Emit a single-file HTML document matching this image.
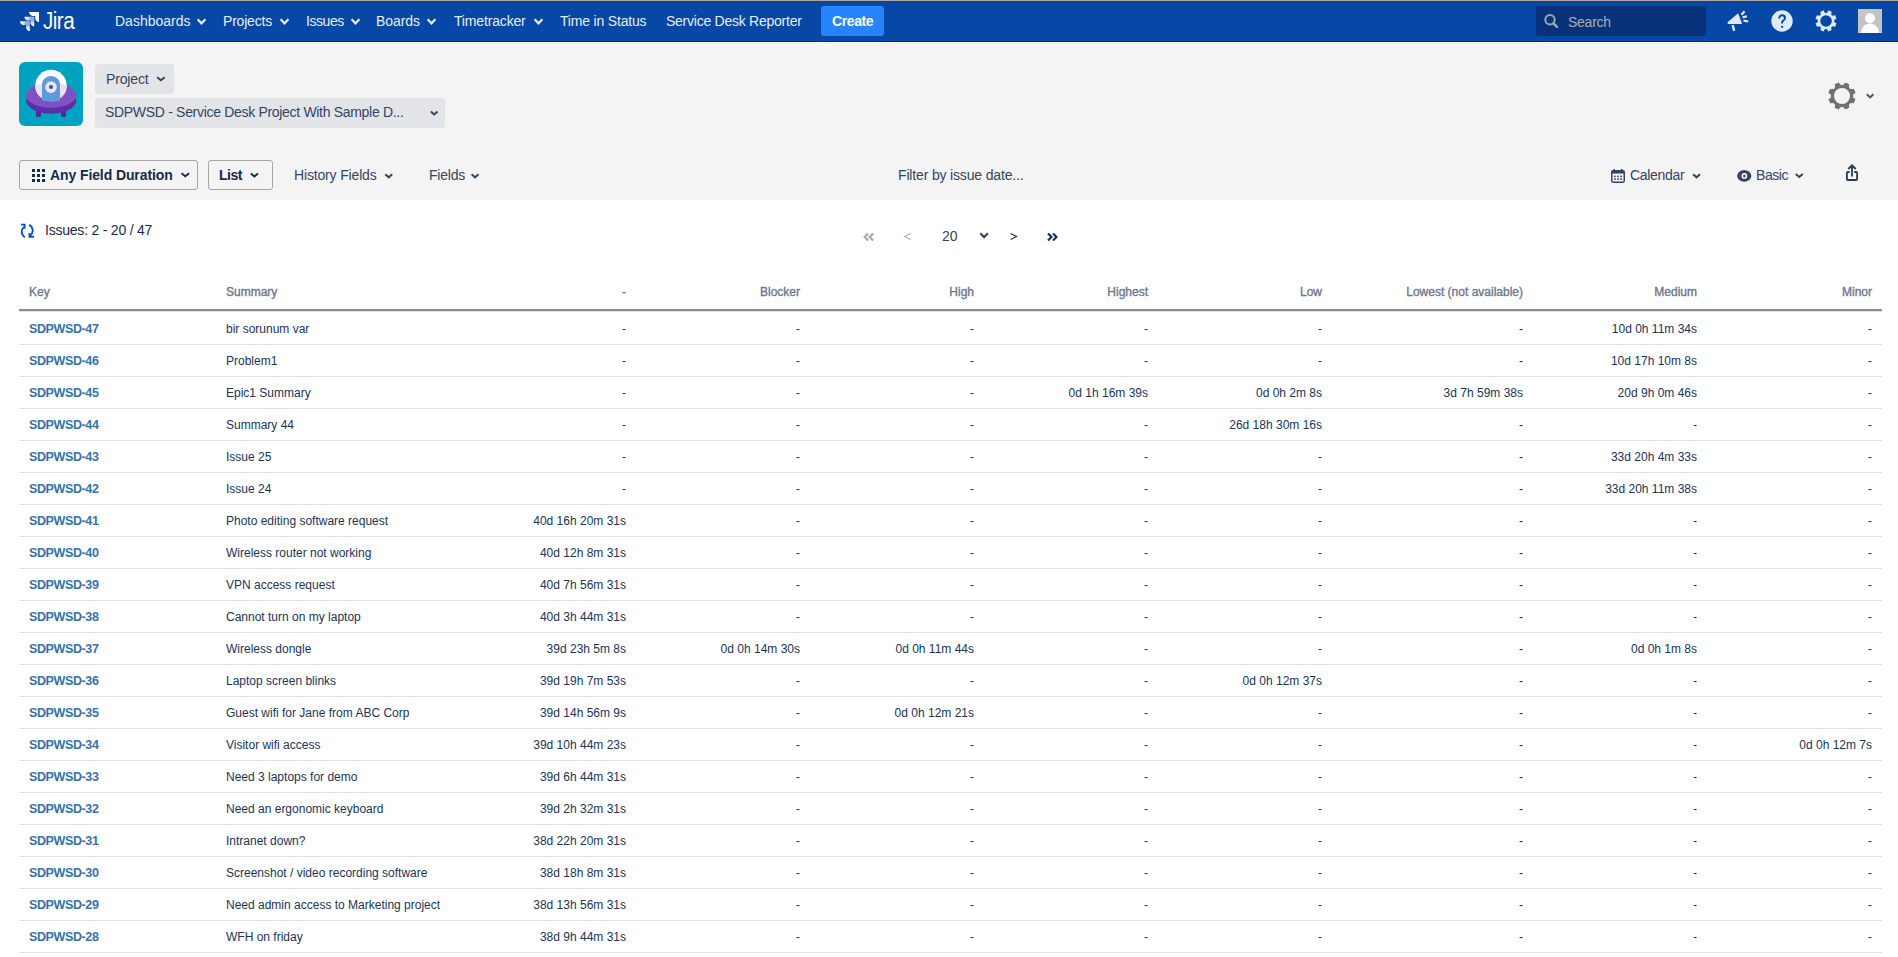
<!DOCTYPE html>
<html><head><meta charset="utf-8"><title>Jira</title>
<style>
html,body{margin:0;padding:0;}
body{width:1898px;height:957px;overflow:hidden;position:relative;background:#fff;font-family:"Liberation Sans",sans-serif;color:#172b4d;}
.abs{position:absolute;display:block;}
.t{position:absolute;white-space:nowrap;line-height:16px;}
.nav{font-size:14px;letter-spacing:-0.25px;color:#e6eeff;top:13px;}
.tb{font-size:14px;letter-spacing:-0.22px;color:#344563;}
.cell{font-size:12px;color:#20335a;line-height:16px;}
.hd{font-size:12px;color:#6b778c;-webkit-text-stroke:0.35px #6b778c;line-height:16px;}
.key{font-size:12.5px;letter-spacing:-0.38px;font-weight:bold;color:#3572b0;line-height:16px;}
</style></head><body>

<div class="abs" style="left:0;top:0;width:1898px;height:1px;background:#b3aa9d"></div>
<div class="abs" style="left:0;top:1px;width:1898px;height:1px;background:#0041a8"></div>
<div class="abs" style="left:0;top:2px;width:1898px;height:39px;background:#0747a6"></div>
<div class="abs" style="left:0;top:41px;width:1898px;height:1px;background:#1b2a4a"></div>
<div class="abs" style="left:0;top:42px;width:1898px;height:1px;background:#ffffff"></div>
<div class="abs" style="left:0;top:43px;width:1898px;height:157px;background:#f4f4f4"></div>
<svg class="abs" style="left:19px;top:11px" width="21" height="21" viewBox="0 0 21 21">
<defs>
<radialGradient id="g1" cx="0.75" cy="0.25" r="0.7"><stop offset="0" stop-color="#fff" stop-opacity="0.5"/><stop offset="0.3" stop-color="#fff" stop-opacity="0.6"/><stop offset="0.75" stop-color="#fff" stop-opacity="1"/></radialGradient>
</defs>
<path d="M10 1 L20 1 L20 11 L19 11 C18 10.5 16.3 9 16.3 8 L16.3 5 L13.5 5 C12 5 10.3 3 10 1.6 Z" fill="#fff"/>
<path d="M5.5 5.8 L15.2 5.8 L15.2 15.3 L14.2 15.3 C13.2 14.8 11.5 13.3 11.5 12.3 L11.5 9.6 L8.8 9.6 C7.3 9.6 5.8 7.6 5.5 6.4 Z" fill="url(#g1)"/>
<path d="M1 10.3 L10.8 10.3 L10.8 20 L9.8 20 C8.8 19.5 7.1 18 7.1 17 L7.1 14.1 L4.3 14.1 C2.8 14.1 1.3 12.1 1 10.9 Z" fill="url(#g1)"/>
</svg>
<div class="t" style="left:43px;top:9px;font-size:23px;line-height:24px;color:#fff;letter-spacing:-0.6px;transform:scaleX(0.9);transform-origin:0 0">Jira</div>
<div class="t nav" style="left:115px;letter-spacing:0.0px">Dashboards</div>
<svg class="abs" style="left:194px;top:16px" width="15" height="12" viewBox="194 16 15 12"><path d="M197.60 19.20 L201.50 23.30 L205.40 19.20" fill="none" stroke="#e6eeff" stroke-width="2.2" stroke-linecap="butt" stroke-linejoin="miter"/></svg>
<div class="t nav" style="left:223px;letter-spacing:-0.2px">Projects</div>
<svg class="abs" style="left:277px;top:16px" width="15" height="12" viewBox="277 16 15 12"><path d="M280.60 19.20 L284.50 23.30 L288.40 19.20" fill="none" stroke="#e6eeff" stroke-width="2.2" stroke-linecap="butt" stroke-linejoin="miter"/></svg>
<div class="t nav" style="left:306px;letter-spacing:-0.45px">Issues</div>
<svg class="abs" style="left:348px;top:16px" width="15" height="12" viewBox="348 16 15 12"><path d="M351.60 19.20 L355.50 23.30 L359.40 19.20" fill="none" stroke="#e6eeff" stroke-width="2.2" stroke-linecap="butt" stroke-linejoin="miter"/></svg>
<div class="t nav" style="left:376px;letter-spacing:-0.08px">Boards</div>
<svg class="abs" style="left:424px;top:16px" width="15" height="12" viewBox="424 16 15 12"><path d="M427.60 19.20 L431.50 23.30 L435.40 19.20" fill="none" stroke="#e6eeff" stroke-width="2.2" stroke-linecap="butt" stroke-linejoin="miter"/></svg>
<div class="t nav" style="left:454px;letter-spacing:-0.16px">Timetracker</div>
<svg class="abs" style="left:531px;top:16px" width="15" height="12" viewBox="531 16 15 12"><path d="M534.60 19.20 L538.50 23.30 L542.40 19.20" fill="none" stroke="#e6eeff" stroke-width="2.2" stroke-linecap="butt" stroke-linejoin="miter"/></svg>
<div class="t nav" style="left:560px;letter-spacing:-0.18px">Time in Status</div>
<div class="t nav" style="left:666px">Service Desk Reporter</div>
<div class="abs" style="left:821px;top:6px;width:63px;height:30px;background:#2684ff;border-radius:3px"></div>
<div class="t" style="left:832px;top:13px;font-size:14px;letter-spacing:-0.4px;font-weight:bold;color:#fff">Create</div>
<div class="abs" style="left:1536px;top:6px;width:170px;height:30px;background:#08337a;border-radius:3px"></div>
<svg class="abs" style="left:1543px;top:13px" width="16" height="16" viewBox="0 0 16 16"><circle cx="7" cy="6.8" r="4.7" fill="none" stroke="#9ea5b2" stroke-width="2"/><path d="M10.4 10.3 L14 13.9" stroke="#9ea5b2" stroke-width="2.5" stroke-linecap="round"/></svg>
<div class="t nav" style="left:1568px;top:14px;color:#a5adba">Search</div>
<svg class="abs" style="left:1722px;top:6px" width="32" height="30" viewBox="0 0 32 30">
<path d="M6.2 16.4 L15.9 8.2 L19.4 17.5 L6.2 17.5 Z" fill="#deebff" stroke="#deebff" stroke-width="1.1" stroke-linejoin="round"/>
<path d="M10.6 19.2 L12.2 24.8" stroke="#deebff" stroke-width="2.4" stroke-linecap="butt"/>
<path d="M19.5 8.8 L22.5 5.2 M20.6 11.4 L24.9 10.3 M21.5 14.6 L26.2 15.5" stroke="#deebff" stroke-width="2.2" stroke-linecap="butt"/>
</svg>
<svg class="abs" style="left:1771px;top:10px" width="22" height="22" viewBox="0 0 22 22">
<circle cx="11" cy="11" r="10.7" fill="#deebff"/>
<path d="M8.2 8.5 C8.2 6.4 9.5 5.2 11.1 5.2 C12.8 5.2 14 6.4 14 7.9 C14 9.5 12.7 10.2 11.8 11 C11.3 11.5 11.1 11.9 11.1 12.6 L11.1 13.6" fill="none" stroke="#0747a6" stroke-width="1.95" stroke-linecap="butt"/>
<circle cx="11.1" cy="16.9" r="1.15" fill="#0747a6"/>
</svg>
<svg class="abs" style="left:1814px;top:9px" width="24" height="24" viewBox="0 0 24 24"><circle cx="12" cy="12" r="10.65" fill="#deebff"/><circle cx="12.00" cy="1.90" r="2.0" fill="#0747a6"/><circle cx="19.14" cy="4.86" r="2.0" fill="#0747a6"/><circle cx="22.10" cy="12.00" r="2.0" fill="#0747a6"/><circle cx="19.14" cy="19.14" r="2.0" fill="#0747a6"/><circle cx="12.00" cy="22.10" r="2.0" fill="#0747a6"/><circle cx="4.86" cy="19.14" r="2.0" fill="#0747a6"/><circle cx="1.90" cy="12.00" r="2.0" fill="#0747a6"/><circle cx="4.86" cy="4.86" r="2.0" fill="#0747a6"/><circle cx="12" cy="12" r="5.8" fill="#0747a6"/></svg>
<svg class="abs" style="left:1858px;top:9px" width="24" height="24" viewBox="0 0 24 24">
<rect width="24" height="24" fill="#c4c4c4"/>
<circle cx="12" cy="9.2" r="5" fill="#fff"/>
<path d="M2.9 24 C3.4 18.2 7 14.6 12 14.6 C17 14.6 20.6 18.2 21.1 24 Z" fill="#fff"/>
</svg>
<svg class="abs" style="left:19px;top:62px" width="64" height="64" viewBox="0 0 64 64">
<rect width="64" height="64" rx="6" fill="#00a3bf"/>
<rect x="17" y="44" width="5" height="11" rx="1.5" fill="#5028a0"/>
<rect x="42" y="44" width="5" height="11" rx="1.5" fill="#5028a0"/>
<ellipse cx="32.2" cy="39" rx="25" ry="12.7" fill="#5a2fa8"/>
<ellipse cx="32.2" cy="33.3" rx="25.1" ry="12.5" fill="#8350c4"/>
<circle cx="32" cy="23.5" r="15.7" fill="#ffffff"/>
<path d="M16.3 23.5 A15.7 15.7 0 0 0 47.7 23.5 L47.7 25 C44 30 38 33 32 33 C26 33 20 30 16.3 25 Z" fill="#e9ddf6" opacity="0.0"/>
<clipPath id="cp"><circle cx="32" cy="23.5" r="15.7"/></clipPath>
<ellipse cx="32.2" cy="33.3" rx="25.1" ry="12.5" fill="#eae0f7" clip-path="url(#cp)"/>
<path d="M23 38.5 L23 23 C23 17.5 27 14 32 14 C37 14 41 17.5 41 23 L41 38.5 C38 39.3 35 39.6 32 39.6 C29 39.6 26 39.3 23 38.5 Z" fill="#5e9bdb"/>
<circle cx="32" cy="25.1" r="5.8" fill="#ebe3f7"/>
<circle cx="32" cy="25.1" r="2" fill="#3d4c8a"/>
</svg>
<div class="abs" style="left:95px;top:64px;width:79px;height:30px;background:#e3e4e8;border-radius:3px"></div>
<div class="t tb" style="left:106px;top:71px;letter-spacing:-0.16px">Project</div>
<svg class="abs" style="left:154px;top:74px" width="15" height="11" viewBox="154 74 15 11"><path d="M157.10 77.20 L160.90 80.20 L164.70 77.20" fill="none" stroke="#344563" stroke-width="2.0" stroke-linecap="butt" stroke-linejoin="miter"/></svg>
<div class="abs" style="left:95px;top:98px;width:350px;height:30px;background:#e3e4e8;border-radius:3px"></div>
<div class="t tb" style="left:105px;top:104px;letter-spacing:-0.31px">SDPWSD - Service Desk Project With Sample D...</div>
<svg class="abs" style="left:427px;top:108px" width="14" height="11" viewBox="427 108 14 11"><path d="M430.80 111.40 L434.20 114.40 L437.60 111.40" fill="none" stroke="#344563" stroke-width="2.0" stroke-linecap="butt" stroke-linejoin="miter"/></svg>
<svg class="abs" style="left:1826px;top:80px" width="32" height="32" viewBox="0 0 32 32"><circle cx="16" cy="16" r="13.75" fill="#707070"/><circle cx="16.00" cy="2.10" r="2.85" fill="#f4f4f4"/><circle cx="25.83" cy="6.17" r="2.85" fill="#f4f4f4"/><circle cx="29.90" cy="16.00" r="2.85" fill="#f4f4f4"/><circle cx="25.83" cy="25.83" r="2.85" fill="#f4f4f4"/><circle cx="16.00" cy="29.90" r="2.85" fill="#f4f4f4"/><circle cx="6.17" cy="25.83" r="2.85" fill="#f4f4f4"/><circle cx="2.10" cy="16.00" r="2.85" fill="#f4f4f4"/><circle cx="6.17" cy="6.17" r="2.85" fill="#f4f4f4"/><circle cx="16" cy="16" r="8.0" fill="#f4f4f4"/></svg>
<svg class="abs" style="left:1863px;top:91px" width="14" height="11" viewBox="1863 91 14 11"><path d="M1866.80 94.20 L1870.10 97.40 L1873.40 94.20" fill="none" stroke="#4a5568" stroke-width="1.9" stroke-linecap="butt" stroke-linejoin="miter"/></svg>
<div class="abs" style="left:19px;top:160px;width:177px;height:28px;border:1px solid #a5a5a5;border-radius:3px"></div>
<div class="abs" style="left:32px;top:169px;width:3px;height:3px;background:#172b4d"></div>
<div class="abs" style="left:37px;top:169px;width:3px;height:3px;background:#172b4d"></div>
<div class="abs" style="left:42px;top:169px;width:3px;height:3px;background:#172b4d"></div>
<div class="abs" style="left:32px;top:174px;width:3px;height:3px;background:#172b4d"></div>
<div class="abs" style="left:37px;top:174px;width:3px;height:3px;background:#172b4d"></div>
<div class="abs" style="left:42px;top:174px;width:3px;height:3px;background:#172b4d"></div>
<div class="abs" style="left:32px;top:179px;width:3px;height:3px;background:#172b4d"></div>
<div class="abs" style="left:37px;top:179px;width:3px;height:3px;background:#172b4d"></div>
<div class="abs" style="left:42px;top:179px;width:3px;height:3px;background:#172b4d"></div>
<div class="t" style="left:50px;top:167px;font-size:14px;letter-spacing:-0.1px;font-weight:bold;color:#172b4d">Any Field Duration</div>
<svg class="abs" style="left:178px;top:170px" width="15" height="11" viewBox="178 170 15 11"><path d="M181.50 173.20 L185.30 176.20 L189.10 173.20" fill="none" stroke="#172b4d" stroke-width="2.0" stroke-linecap="butt" stroke-linejoin="miter"/></svg>
<div class="abs" style="left:208px;top:160px;width:63px;height:28px;border:1px solid #a5a5a5;border-radius:3px"></div>
<div class="t" style="left:219px;top:167px;font-size:14px;letter-spacing:-0.5px;font-weight:bold;color:#172b4d">List</div>
<svg class="abs" style="left:247px;top:170px" width="15" height="11" viewBox="247 170 15 11"><path d="M250.80 173.50 L254.40 176.50 L258.00 173.50" fill="none" stroke="#172b4d" stroke-width="2.0" stroke-linecap="butt" stroke-linejoin="miter"/></svg>
<div class="t tb" style="left:294px;top:167px;letter-spacing:-0.16px">History Fields</div>
<svg class="abs" style="left:382px;top:171px" width="14" height="11" viewBox="382 171 14 11"><path d="M385.30 174.30 L388.75 177.30 L392.20 174.30" fill="none" stroke="#344563" stroke-width="2.0" stroke-linecap="butt" stroke-linejoin="miter"/></svg>
<div class="t tb" style="left:429px;top:167px">Fields</div>
<svg class="abs" style="left:468px;top:171px" width="14" height="11" viewBox="468 171 14 11"><path d="M471.60 174.30 L475.05 177.30 L478.50 174.30" fill="none" stroke="#344563" stroke-width="2.0" stroke-linecap="butt" stroke-linejoin="miter"/></svg>
<div class="t tb" style="left:898px;top:167px;letter-spacing:-0.16px">Filter by issue date...</div>
<svg class="abs" style="left:1611px;top:168px" width="14" height="15" viewBox="0 0 14 15">
<rect x="0.75" y="2.75" width="12.5" height="11.5" rx="1.4" fill="none" stroke="#344563" stroke-width="1.5"/>
<rect x="0.75" y="2.75" width="12.5" height="2.8" fill="#344563"/>
<rect x="2.5" y="1" width="1.5" height="2.5" fill="#344563"/><rect x="10" y="1" width="1.5" height="2.5" fill="#344563"/>
<rect x="3.1" y="7.6" width="1.6" height="1.6" fill="#344563"/><rect x="6.2" y="7.6" width="1.6" height="1.6" fill="#344563"/><rect x="9.3" y="7.6" width="1.6" height="1.6" fill="#344563"/>
<rect x="3.1" y="10.3" width="1.6" height="1.6" fill="#344563"/><rect x="6.2" y="10.3" width="1.6" height="1.6" fill="#344563"/><rect x="9.3" y="10.3" width="1.6" height="1.6" fill="#344563"/>
</svg>
<div class="t tb" style="left:1630px;top:167px;letter-spacing:-0.3px">Calendar</div>
<svg class="abs" style="left:1690px;top:171px" width="14" height="11" viewBox="1690 171 14 11"><path d="M1693.10 174.30 L1696.55 177.30 L1700.00 174.30" fill="none" stroke="#344563" stroke-width="2.0" stroke-linecap="butt" stroke-linejoin="miter"/></svg>
<svg class="abs" style="left:1736px;top:169px" width="17" height="14" viewBox="0 0 17 14">
<ellipse cx="8.25" cy="6.9" rx="7.1" ry="5.95" fill="#344563"/>
<circle cx="8.4" cy="6.9" r="2.9" fill="#f4f4f4"/><circle cx="8.4" cy="6.9" r="1.25" fill="#344563"/>
</svg>
<div class="t tb" style="left:1756px;top:167px;letter-spacing:-0.42px">Basic</div>
<svg class="abs" style="left:1792px;top:171px" width="14" height="11" viewBox="1792 171 14 11"><path d="M1795.80 174.00 L1799.25 177.00 L1802.70 174.00" fill="none" stroke="#344563" stroke-width="2.0" stroke-linecap="butt" stroke-linejoin="miter"/></svg>
<svg class="abs" style="left:1840px;top:160px" width="24" height="26" viewBox="0 0 24 26">
<path d="M9.6 12 L7.9 12 Q6.9 12 6.9 13 L6.9 19 Q6.9 20 7.9 20 L16.1 20 Q17.1 20 17.1 19 L17.1 13 Q17.1 12 16.1 12 L14.2 12" fill="none" stroke="#253858" stroke-width="1.8"/>
<path d="M12 16.6 L12 6" stroke="#253858" stroke-width="1.8"/>
<path d="M8.3 9 L12 5.3 L15.7 9" fill="none" stroke="#253858" stroke-width="1.8"/>
</svg>
<svg class="abs" style="left:16px;top:218px" width="24" height="26" viewBox="0 0 24 26">
<path d="M8.2 8.9 C4.9 11.3 4.6 16.3 8.7 19.2" fill="none" stroke="#0052cc" stroke-width="1.8"/>
<path d="M4.9 6.7 L8.6 6.7 L8.6 10.8" fill="none" stroke="#0052cc" stroke-width="1.8"/>
<path d="M13.1 6.9 C17.6 9.2 17.9 14.8 14 17.7" fill="none" stroke="#0052cc" stroke-width="1.8"/>
<path d="M13.4 14.9 L13.4 18.75 L17.9 18.75" fill="none" stroke="#0052cc" stroke-width="1.8"/>
</svg>
<div class="t" style="left:45px;top:222px;font-size:14px;letter-spacing:-0.22px;color:#172b4d">Issues: 2 - 20 / 47</div>
<svg class="abs" style="left:858px;top:226px" width="60" height="20" viewBox="858 226 60 20">
<path d="M868.1 233.5 L864.6 237 L868.1 240.5 M873.1 233.5 L869.6 237 L873.1 240.5" fill="none" stroke="#a0a8b5" stroke-width="2.1" stroke-linecap="butt" stroke-linejoin="miter"/>
<path d="M910.5 233.4 L904.5 236.5 L910.5 239.6" fill="none" stroke="#a5adba" stroke-width="1.1"/>
</svg>
<div class="t" style="left:942px;top:228px;font-size:14px;color:#344563">20</div>
<svg class="abs" style="left:972px;top:226px" width="90" height="20" viewBox="972 226 90 20">
<path d="M980.3 233.3 L984.1 237.1 L987.9 233.3" fill="none" stroke="#344563" stroke-width="2.2"/>
<path d="M1010.6 233.4 L1016.6 236.5 L1010.6 239.6" fill="none" stroke="#172b4d" stroke-width="1.1"/>
<path d="M1048 233.5 L1051.5 237 L1048 240.5 M1053 233.5 L1056.5 237 L1053 240.5" fill="none" stroke="#172b4d" stroke-width="2.1"/>
</svg>
<div class="t hd" style="left:29px;top:284px">Key</div>
<div class="t hd" style="left:226px;top:284px">Summary</div>
<div class="t hd" style="right:1272px;top:284px;text-align:right">-</div>
<div class="t hd" style="right:1098px;top:284px;text-align:right">Blocker</div>
<div class="t hd" style="right:924px;top:284px;text-align:right">High</div>
<div class="t hd" style="right:750px;top:284px;text-align:right">Highest</div>
<div class="t hd" style="right:576px;top:284px;text-align:right">Low</div>
<div class="t hd" style="right:375px;top:284px;text-align:right">Lowest (not available)</div>
<div class="t hd" style="right:201px;top:284px;text-align:right">Medium</div>
<div class="t hd" style="right:26px;top:284px;text-align:right">Minor</div>
<div class="abs" style="left:19px;top:309px;width:1863px;height:2px;background:#8c8c8c"></div>
<div class="abs" style="left:19px;top:311px;width:1863px;height:1px;background:#dfe1e6"></div>
<div class="t key" style="left:29px;top:321px">SDPWSD-47</div>
<div class="t cell" style="left:226px;top:321px">bir sorunum var</div>
<div class="t cell" style="right:1272px;top:321px">-</div>
<div class="t cell" style="right:1098px;top:321px">-</div>
<div class="t cell" style="right:924px;top:321px">-</div>
<div class="t cell" style="right:750px;top:321px">-</div>
<div class="t cell" style="right:576px;top:321px">-</div>
<div class="t cell" style="right:375px;top:321px">-</div>
<div class="t cell" style="right:201px;top:321px">10d 0h 11m 34s</div>
<div class="t cell" style="right:26px;top:321px">-</div>
<div class="abs" style="left:19px;top:344px;width:1863px;height:1px;background:#dfe1e6"></div>
<div class="t key" style="left:29px;top:353px">SDPWSD-46</div>
<div class="t cell" style="left:226px;top:353px">Problem1</div>
<div class="t cell" style="right:1272px;top:353px">-</div>
<div class="t cell" style="right:1098px;top:353px">-</div>
<div class="t cell" style="right:924px;top:353px">-</div>
<div class="t cell" style="right:750px;top:353px">-</div>
<div class="t cell" style="right:576px;top:353px">-</div>
<div class="t cell" style="right:375px;top:353px">-</div>
<div class="t cell" style="right:201px;top:353px">10d 17h 10m 8s</div>
<div class="t cell" style="right:26px;top:353px">-</div>
<div class="abs" style="left:19px;top:376px;width:1863px;height:1px;background:#dfe1e6"></div>
<div class="t key" style="left:29px;top:385px">SDPWSD-45</div>
<div class="t cell" style="left:226px;top:385px">Epic1 Summary</div>
<div class="t cell" style="right:1272px;top:385px">-</div>
<div class="t cell" style="right:1098px;top:385px">-</div>
<div class="t cell" style="right:924px;top:385px">-</div>
<div class="t cell" style="right:750px;top:385px">0d 1h 16m 39s</div>
<div class="t cell" style="right:576px;top:385px">0d 0h 2m 8s</div>
<div class="t cell" style="right:375px;top:385px">3d 7h 59m 38s</div>
<div class="t cell" style="right:201px;top:385px">20d 9h 0m 46s</div>
<div class="t cell" style="right:26px;top:385px">-</div>
<div class="abs" style="left:19px;top:408px;width:1863px;height:1px;background:#dfe1e6"></div>
<div class="t key" style="left:29px;top:417px">SDPWSD-44</div>
<div class="t cell" style="left:226px;top:417px">Summary 44</div>
<div class="t cell" style="right:1272px;top:417px">-</div>
<div class="t cell" style="right:1098px;top:417px">-</div>
<div class="t cell" style="right:924px;top:417px">-</div>
<div class="t cell" style="right:750px;top:417px">-</div>
<div class="t cell" style="right:576px;top:417px">26d 18h 30m 16s</div>
<div class="t cell" style="right:375px;top:417px">-</div>
<div class="t cell" style="right:201px;top:417px">-</div>
<div class="t cell" style="right:26px;top:417px">-</div>
<div class="abs" style="left:19px;top:440px;width:1863px;height:1px;background:#dfe1e6"></div>
<div class="t key" style="left:29px;top:449px">SDPWSD-43</div>
<div class="t cell" style="left:226px;top:449px">Issue 25</div>
<div class="t cell" style="right:1272px;top:449px">-</div>
<div class="t cell" style="right:1098px;top:449px">-</div>
<div class="t cell" style="right:924px;top:449px">-</div>
<div class="t cell" style="right:750px;top:449px">-</div>
<div class="t cell" style="right:576px;top:449px">-</div>
<div class="t cell" style="right:375px;top:449px">-</div>
<div class="t cell" style="right:201px;top:449px">33d 20h 4m 33s</div>
<div class="t cell" style="right:26px;top:449px">-</div>
<div class="abs" style="left:19px;top:472px;width:1863px;height:1px;background:#dfe1e6"></div>
<div class="t key" style="left:29px;top:481px">SDPWSD-42</div>
<div class="t cell" style="left:226px;top:481px">Issue 24</div>
<div class="t cell" style="right:1272px;top:481px">-</div>
<div class="t cell" style="right:1098px;top:481px">-</div>
<div class="t cell" style="right:924px;top:481px">-</div>
<div class="t cell" style="right:750px;top:481px">-</div>
<div class="t cell" style="right:576px;top:481px">-</div>
<div class="t cell" style="right:375px;top:481px">-</div>
<div class="t cell" style="right:201px;top:481px">33d 20h 11m 38s</div>
<div class="t cell" style="right:26px;top:481px">-</div>
<div class="abs" style="left:19px;top:504px;width:1863px;height:1px;background:#dfe1e6"></div>
<div class="t key" style="left:29px;top:513px">SDPWSD-41</div>
<div class="t cell" style="left:226px;top:513px">Photo editing software request</div>
<div class="t cell" style="right:1272px;top:513px">40d 16h 20m 31s</div>
<div class="t cell" style="right:1098px;top:513px">-</div>
<div class="t cell" style="right:924px;top:513px">-</div>
<div class="t cell" style="right:750px;top:513px">-</div>
<div class="t cell" style="right:576px;top:513px">-</div>
<div class="t cell" style="right:375px;top:513px">-</div>
<div class="t cell" style="right:201px;top:513px">-</div>
<div class="t cell" style="right:26px;top:513px">-</div>
<div class="abs" style="left:19px;top:536px;width:1863px;height:1px;background:#dfe1e6"></div>
<div class="t key" style="left:29px;top:545px">SDPWSD-40</div>
<div class="t cell" style="left:226px;top:545px">Wireless router not working</div>
<div class="t cell" style="right:1272px;top:545px">40d 12h 8m 31s</div>
<div class="t cell" style="right:1098px;top:545px">-</div>
<div class="t cell" style="right:924px;top:545px">-</div>
<div class="t cell" style="right:750px;top:545px">-</div>
<div class="t cell" style="right:576px;top:545px">-</div>
<div class="t cell" style="right:375px;top:545px">-</div>
<div class="t cell" style="right:201px;top:545px">-</div>
<div class="t cell" style="right:26px;top:545px">-</div>
<div class="abs" style="left:19px;top:568px;width:1863px;height:1px;background:#dfe1e6"></div>
<div class="t key" style="left:29px;top:577px">SDPWSD-39</div>
<div class="t cell" style="left:226px;top:577px">VPN access request</div>
<div class="t cell" style="right:1272px;top:577px">40d 7h 56m 31s</div>
<div class="t cell" style="right:1098px;top:577px">-</div>
<div class="t cell" style="right:924px;top:577px">-</div>
<div class="t cell" style="right:750px;top:577px">-</div>
<div class="t cell" style="right:576px;top:577px">-</div>
<div class="t cell" style="right:375px;top:577px">-</div>
<div class="t cell" style="right:201px;top:577px">-</div>
<div class="t cell" style="right:26px;top:577px">-</div>
<div class="abs" style="left:19px;top:600px;width:1863px;height:1px;background:#dfe1e6"></div>
<div class="t key" style="left:29px;top:609px">SDPWSD-38</div>
<div class="t cell" style="left:226px;top:609px">Cannot turn on my laptop</div>
<div class="t cell" style="right:1272px;top:609px">40d 3h 44m 31s</div>
<div class="t cell" style="right:1098px;top:609px">-</div>
<div class="t cell" style="right:924px;top:609px">-</div>
<div class="t cell" style="right:750px;top:609px">-</div>
<div class="t cell" style="right:576px;top:609px">-</div>
<div class="t cell" style="right:375px;top:609px">-</div>
<div class="t cell" style="right:201px;top:609px">-</div>
<div class="t cell" style="right:26px;top:609px">-</div>
<div class="abs" style="left:19px;top:632px;width:1863px;height:1px;background:#dfe1e6"></div>
<div class="t key" style="left:29px;top:641px">SDPWSD-37</div>
<div class="t cell" style="left:226px;top:641px">Wireless dongle</div>
<div class="t cell" style="right:1272px;top:641px">39d 23h 5m 8s</div>
<div class="t cell" style="right:1098px;top:641px">0d 0h 14m 30s</div>
<div class="t cell" style="right:924px;top:641px">0d 0h 11m 44s</div>
<div class="t cell" style="right:750px;top:641px">-</div>
<div class="t cell" style="right:576px;top:641px">-</div>
<div class="t cell" style="right:375px;top:641px">-</div>
<div class="t cell" style="right:201px;top:641px">0d 0h 1m 8s</div>
<div class="t cell" style="right:26px;top:641px">-</div>
<div class="abs" style="left:19px;top:664px;width:1863px;height:1px;background:#dfe1e6"></div>
<div class="t key" style="left:29px;top:673px">SDPWSD-36</div>
<div class="t cell" style="left:226px;top:673px">Laptop screen blinks</div>
<div class="t cell" style="right:1272px;top:673px">39d 19h 7m 53s</div>
<div class="t cell" style="right:1098px;top:673px">-</div>
<div class="t cell" style="right:924px;top:673px">-</div>
<div class="t cell" style="right:750px;top:673px">-</div>
<div class="t cell" style="right:576px;top:673px">0d 0h 12m 37s</div>
<div class="t cell" style="right:375px;top:673px">-</div>
<div class="t cell" style="right:201px;top:673px">-</div>
<div class="t cell" style="right:26px;top:673px">-</div>
<div class="abs" style="left:19px;top:696px;width:1863px;height:1px;background:#dfe1e6"></div>
<div class="t key" style="left:29px;top:705px">SDPWSD-35</div>
<div class="t cell" style="left:226px;top:705px">Guest wifi for Jane from ABC Corp</div>
<div class="t cell" style="right:1272px;top:705px">39d 14h 56m 9s</div>
<div class="t cell" style="right:1098px;top:705px">-</div>
<div class="t cell" style="right:924px;top:705px">0d 0h 12m 21s</div>
<div class="t cell" style="right:750px;top:705px">-</div>
<div class="t cell" style="right:576px;top:705px">-</div>
<div class="t cell" style="right:375px;top:705px">-</div>
<div class="t cell" style="right:201px;top:705px">-</div>
<div class="t cell" style="right:26px;top:705px">-</div>
<div class="abs" style="left:19px;top:728px;width:1863px;height:1px;background:#dfe1e6"></div>
<div class="t key" style="left:29px;top:737px">SDPWSD-34</div>
<div class="t cell" style="left:226px;top:737px">Visitor wifi access</div>
<div class="t cell" style="right:1272px;top:737px">39d 10h 44m 23s</div>
<div class="t cell" style="right:1098px;top:737px">-</div>
<div class="t cell" style="right:924px;top:737px">-</div>
<div class="t cell" style="right:750px;top:737px">-</div>
<div class="t cell" style="right:576px;top:737px">-</div>
<div class="t cell" style="right:375px;top:737px">-</div>
<div class="t cell" style="right:201px;top:737px">-</div>
<div class="t cell" style="right:26px;top:737px">0d 0h 12m 7s</div>
<div class="abs" style="left:19px;top:760px;width:1863px;height:1px;background:#dfe1e6"></div>
<div class="t key" style="left:29px;top:769px">SDPWSD-33</div>
<div class="t cell" style="left:226px;top:769px">Need 3 laptops for demo</div>
<div class="t cell" style="right:1272px;top:769px">39d 6h 44m 31s</div>
<div class="t cell" style="right:1098px;top:769px">-</div>
<div class="t cell" style="right:924px;top:769px">-</div>
<div class="t cell" style="right:750px;top:769px">-</div>
<div class="t cell" style="right:576px;top:769px">-</div>
<div class="t cell" style="right:375px;top:769px">-</div>
<div class="t cell" style="right:201px;top:769px">-</div>
<div class="t cell" style="right:26px;top:769px">-</div>
<div class="abs" style="left:19px;top:792px;width:1863px;height:1px;background:#dfe1e6"></div>
<div class="t key" style="left:29px;top:801px">SDPWSD-32</div>
<div class="t cell" style="left:226px;top:801px">Need an ergonomic keyboard</div>
<div class="t cell" style="right:1272px;top:801px">39d 2h 32m 31s</div>
<div class="t cell" style="right:1098px;top:801px">-</div>
<div class="t cell" style="right:924px;top:801px">-</div>
<div class="t cell" style="right:750px;top:801px">-</div>
<div class="t cell" style="right:576px;top:801px">-</div>
<div class="t cell" style="right:375px;top:801px">-</div>
<div class="t cell" style="right:201px;top:801px">-</div>
<div class="t cell" style="right:26px;top:801px">-</div>
<div class="abs" style="left:19px;top:824px;width:1863px;height:1px;background:#dfe1e6"></div>
<div class="t key" style="left:29px;top:833px">SDPWSD-31</div>
<div class="t cell" style="left:226px;top:833px">Intranet down?</div>
<div class="t cell" style="right:1272px;top:833px">38d 22h 20m 31s</div>
<div class="t cell" style="right:1098px;top:833px">-</div>
<div class="t cell" style="right:924px;top:833px">-</div>
<div class="t cell" style="right:750px;top:833px">-</div>
<div class="t cell" style="right:576px;top:833px">-</div>
<div class="t cell" style="right:375px;top:833px">-</div>
<div class="t cell" style="right:201px;top:833px">-</div>
<div class="t cell" style="right:26px;top:833px">-</div>
<div class="abs" style="left:19px;top:856px;width:1863px;height:1px;background:#dfe1e6"></div>
<div class="t key" style="left:29px;top:865px">SDPWSD-30</div>
<div class="t cell" style="left:226px;top:865px">Screenshot / video recording software</div>
<div class="t cell" style="right:1272px;top:865px">38d 18h 8m 31s</div>
<div class="t cell" style="right:1098px;top:865px">-</div>
<div class="t cell" style="right:924px;top:865px">-</div>
<div class="t cell" style="right:750px;top:865px">-</div>
<div class="t cell" style="right:576px;top:865px">-</div>
<div class="t cell" style="right:375px;top:865px">-</div>
<div class="t cell" style="right:201px;top:865px">-</div>
<div class="t cell" style="right:26px;top:865px">-</div>
<div class="abs" style="left:19px;top:888px;width:1863px;height:1px;background:#dfe1e6"></div>
<div class="t key" style="left:29px;top:897px">SDPWSD-29</div>
<div class="t cell" style="left:226px;top:897px">Need admin access to Marketing project</div>
<div class="t cell" style="right:1272px;top:897px">38d 13h 56m 31s</div>
<div class="t cell" style="right:1098px;top:897px">-</div>
<div class="t cell" style="right:924px;top:897px">-</div>
<div class="t cell" style="right:750px;top:897px">-</div>
<div class="t cell" style="right:576px;top:897px">-</div>
<div class="t cell" style="right:375px;top:897px">-</div>
<div class="t cell" style="right:201px;top:897px">-</div>
<div class="t cell" style="right:26px;top:897px">-</div>
<div class="abs" style="left:19px;top:920px;width:1863px;height:1px;background:#dfe1e6"></div>
<div class="t key" style="left:29px;top:929px">SDPWSD-28</div>
<div class="t cell" style="left:226px;top:929px">WFH on friday</div>
<div class="t cell" style="right:1272px;top:929px">38d 9h 44m 31s</div>
<div class="t cell" style="right:1098px;top:929px">-</div>
<div class="t cell" style="right:924px;top:929px">-</div>
<div class="t cell" style="right:750px;top:929px">-</div>
<div class="t cell" style="right:576px;top:929px">-</div>
<div class="t cell" style="right:375px;top:929px">-</div>
<div class="t cell" style="right:201px;top:929px">-</div>
<div class="t cell" style="right:26px;top:929px">-</div>
<div class="abs" style="left:19px;top:952px;width:1863px;height:1px;background:#dfe1e6"></div>
</body></html>
